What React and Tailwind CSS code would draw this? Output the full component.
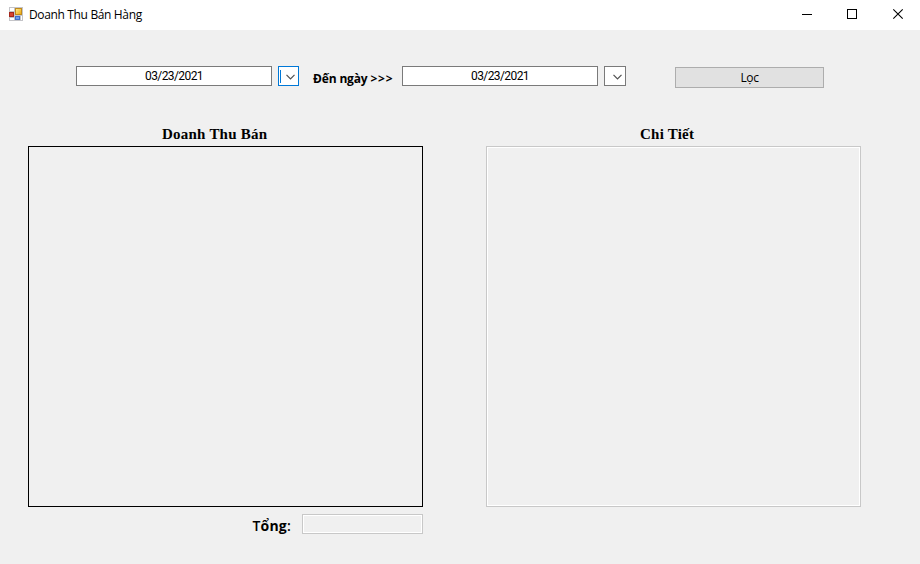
function AppIcon() {
  return (
    <svg width="14" height="14" viewBox="0 0 14 14" shapeRendering="crispEdges">
      <defs>
        <linearGradient id="gold" x1="0" y1="0" x2="1" y2="1">
          <stop offset="0" stopColor="#ffe889" />
          <stop offset="1" stopColor="#eda90e" />
        </linearGradient>
      </defs>
      <rect width="14" height="14" fill="#c4c4c8" />
      <rect x="1" y="1" width="4" height="3" fill="#fff" />
      <rect x="1" y="11" width="4" height="2" fill="#fff" />
      <rect x="12" y="9" width="1" height="4" fill="#fff" />
      <rect x="0" y="5" width="5" height="5" fill="#a3271c" />
      <rect x="1" y="6" width="3" height="3" fill="#d8442e" />
      <rect x="6" y="1" width="7" height="7" fill="#c08a1c" />
      <rect x="7" y="2" width="5" height="5" fill="url(#gold)" />
      <rect x="6" y="9" width="5" height="4" fill="#3f6fca" />
      <rect x="7" y="10" width="3" height="2" fill="#6f9cea" />
    </svg>
  );
}

function Chevron() {
  return (
    <svg width="9" height="6" viewBox="0 0 9 6" fill="none" stroke="#505050" strokeWidth="1.2">
      <path d="M0.5 0.8 L4.5 4.8 L8.5 0.8" />
    </svg>
  );
}

function DateBox() {
  return (
    <div className="h-5 w-[196px] border border-[#7a7a7a] bg-white text-center font-['Roboto',sans-serif] text-[12px] leading-[18px] tracking-[-0.6px] text-black">
      03/23/2021
    </div>
  );
}

export default function App() {
  return (
    <div className="flex h-[564px] w-[920px] flex-col overflow-hidden bg-[#f0f0f0] font-['Open_Sans',sans-serif] text-black">
      <header className="flex h-[30px] shrink-0 items-start bg-white">
        <div className="ml-[9px] mt-[7px]">
          <AppIcon />
        </div>
        <div className="ml-[6px] mt-[6px] whitespace-nowrap text-[12px] leading-[18px] tracking-[-0.35px]">
          Doanh Thu Bán Hàng
        </div>
        <svg className="ml-auto" width="130" height="30" viewBox="0 0 130 30" fill="none" stroke="#000">
          <path d="M12 14.5H22M57.5 9.5H66.5V18.5H57.5Z" shapeRendering="crispEdges" />
          <path d="M103.3 9.3L112.7 18.7M112.7 9.3L103.3 18.7" strokeWidth="1.1" />
        </svg>
      </header>

      <div className="flex h-[94px] shrink-0 items-start pl-[76px] pt-9">
        <DateBox />
        <div className="ml-[6px] flex h-5 w-[21px] items-center border border-[#0078d7] bg-white pl-px">
          <div className="h-[13px] w-px bg-[#0078d7]" />
          <div className="ml-[5px] mt-px">
            <Chevron />
          </div>
        </div>
        <div className="ml-[14px] mt-[4px] w-[89px] whitespace-nowrap text-[12px] font-bold leading-[18px] tracking-[-0.15px]">
          Đến ngày <span className="tracking-[0.75px]">&gt;&gt;&gt;</span>
        </div>
        <DateBox />
        <div className="ml-[6px] flex h-5 w-[22px] items-center border border-[#7a7a7a] bg-white pl-[8px] pt-px">
          <Chevron />
        </div>
        <button className="ml-[49px] mt-px h-[21px] w-[149px] border border-[#adadad] bg-[#e1e1e1] pt-px text-center text-[12px] leading-[18px] tracking-[-0.4px]">
          Lọc
        </button>
      </div>

      <main className="flex items-start pl-7">
        <section className="w-[395px]">
          <h2 className="h-[22px] whitespace-nowrap pl-[134px] pt-px font-['Liberation_Serif',serif] text-[15px] font-bold leading-[19px] tracking-[0.23px]">
            Doanh Thu Bán
          </h2>
          <div className="h-[361px] border border-black" />
          <div className="mt-[7px] flex items-start justify-end">
            <div className="mr-[11px] mt-[3px] whitespace-nowrap text-[14px] leading-[18px] tracking-[0.2px]">
              <span className="font-semibold">T</span>
              <b>ổng</b>
              <span className="font-semibold">:</span>
            </div>
            <div className="h-5 w-[121px] border border-[#c8c8c8]">
              <div className="h-full border border-white" />
            </div>
          </div>
        </section>
        <section className="ml-[63px] w-[375px]">
          <h2 className="h-[22px] whitespace-nowrap pl-[154px] pt-px font-['Liberation_Serif',serif] text-[15px] font-bold leading-[19px] tracking-[0.23px]">
            Chi Tiết
          </h2>
          <div className="h-[361px] border border-[#c8c8c8]">
            <div className="h-full border border-white" />
          </div>
        </section>
      </main>
    </div>
  );
}
